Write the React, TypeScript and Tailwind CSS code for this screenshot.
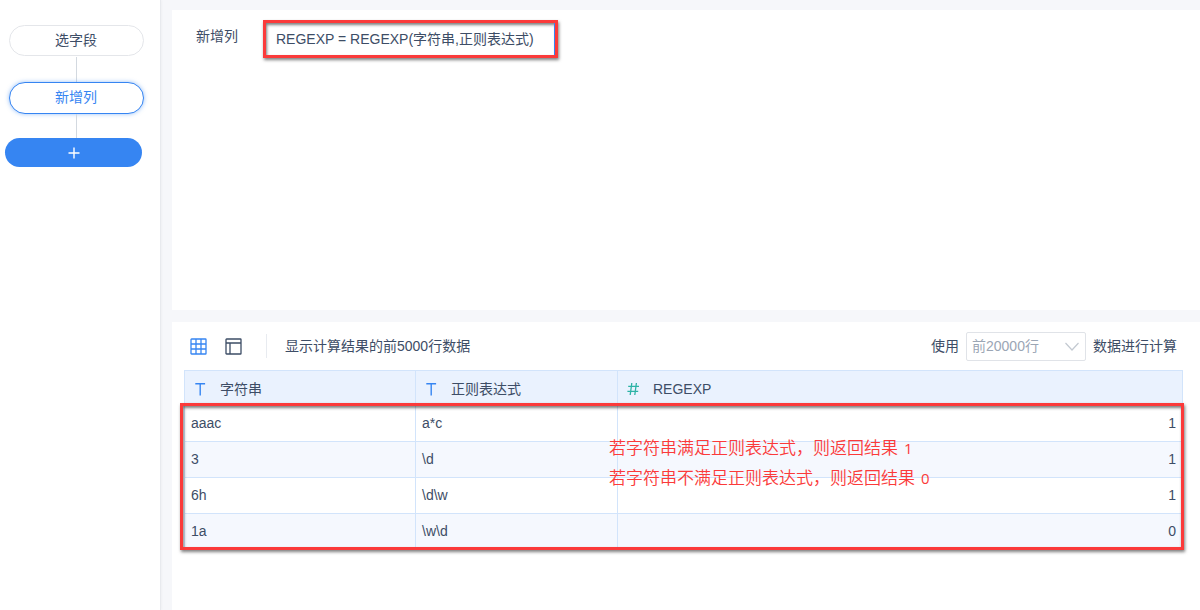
import React from "react";

type Row = { text: string; pattern: string; result: number };

const rows: Row[] = [
  { text: "aaac", pattern: "a*c", result: 1 },
  { text: "3", pattern: "\\d", result: 1 },
  { text: "6h", pattern: "\\d\\w", result: 1 },
  { text: "1a", pattern: "\\w\\d", result: 0 },
];

function TextTypeIcon() {
  return (
    <svg className="h-4 w-4 shrink-0 text-[#3685f2]" viewBox="0 0 16 16" fill="none" stroke="currentColor" strokeWidth="1.4" aria-hidden="true">
      <path d="M3.3 2.7h9.8M8.2 2.7v11.8" />
    </svg>
  );
}

function NumberTypeIcon() {
  return (
    <svg className="h-4 w-4 shrink-0 text-[#2db3a6]" viewBox="0 0 16 16" fill="none" stroke="currentColor" strokeWidth="1.3" aria-hidden="true">
      <path d="M3.2 5.4h10.8M2.4 10.4h10.8M6.8 2L5.2 14M11.4 2L9.8 14" />
    </svg>
  );
}

function GridIcon() {
  return (
    <svg className="h-[17px] w-[17px]" viewBox="0 0 17 17" fill="none" stroke="currentColor" strokeWidth="1.3" aria-hidden="true">
      <rect x="1" y="1" width="15" height="15" rx="0.6" />
      <path d="M6 1v15M11 1v15M1 6h15M1 11h15" />
    </svg>
  );
}

function LayoutIcon() {
  return (
    <svg className="h-[17px] w-[17px]" viewBox="0 0 17 17" fill="none" stroke="currentColor" strokeWidth="1.3" aria-hidden="true">
      <rect x="1" y="1" width="15" height="15" rx="0.6" />
      <path d="M1 5h15M5 5v11" />
    </svg>
  );
}

function Sidebar() {
  return (
    <nav className="w-[161px] shrink-0 border-r border-[#e8eaee] bg-white pt-[25px] pr-4 pl-[5px] shadow-[0_0_3px_rgba(0,0,0,0.06)]">
      <ol className="flex flex-col">
        <li className="flex flex-col items-center">
          <button type="button" className="ml-[3px] h-[31px] w-[135px] rounded-full border border-[#e4e6ea] bg-white pb-[2px]">
            选字段
          </button>
          <span className="mt-px ml-[3px] h-[25px] w-px bg-[#d3d9e0]" />
        </li>
        <li className="flex flex-col items-center">
          <button
            type="button"
            aria-current="step"
            className="ml-[3px] h-8 w-[135px] rounded-full border border-[#3685f2] bg-white pb-[2px] text-[#3685f2] shadow-[0_0_4px_rgba(54,133,242,0.5)]"
          >
            新增列
          </button>
          <span className="ml-[3px] h-6 w-px bg-[#d3d9e0]" />
        </li>
        <li>
          <button type="button" aria-label="添加步骤" className="flex h-[29px] w-[137px] items-center justify-center rounded-full bg-[#3685f2] text-white">
            <svg className="h-3 w-3" viewBox="0 0 12 12" fill="none" stroke="currentColor" strokeWidth="1.4" aria-hidden="true">
              <path d="M6 0.5v11M0.5 6h11" />
            </svg>
          </button>
        </li>
      </ol>
    </nav>
  );
}

function FormulaPanel() {
  return (
    <section className="flex h-[300px] items-start bg-white pt-[10px] pl-6">
      <h2 className="mt-1 mr-[25px] leading-6">新增列</h2>
      <div className="border-[3px] border-[#fb3a3a] shadow-[1px_2px_3px_rgba(0,0,0,0.5),inset_1px_2px_3px_rgba(0,0,0,0.5)]">
        <button type="button" className="block h-8 border-r border-[#3685f2] pr-5 pl-[10px] whitespace-nowrap">
          REGEXP = REGEXP(字符串,正则表达式)
        </button>
      </div>
    </section>
  );
}

function Toolbar() {
  return (
    <div className="flex h-12 items-center">
      <div className="flex items-center gap-[18px] pl-[6px]">
        <button type="button" aria-label="表格视图" className="text-[#3685f2]">
          <GridIcon />
        </button>
        <button type="button" aria-label="布局视图">
          <LayoutIcon />
        </button>
      </div>
      <span className="mr-[18px] ml-6 h-6 w-px bg-[#e8ebf0]" />
      <p>显示计算结果的前5000行数据</p>
      <div className="mr-[6px] ml-auto flex items-center gap-[7px]">
        <label htmlFor="row-limit">使用</label>
        <div className="relative">
          <select
            id="row-limit"
            className="block h-[29px] w-[120px] appearance-none rounded-xs border border-[#e0e3e8] bg-white pr-6 pl-[5px] text-[#9ba6b5]"
          >
            <option>前20000行</option>
          </select>
          <svg className="pointer-events-none absolute top-[10px] right-[7px] h-[9px] w-[14px] text-[#c3c9d1]" viewBox="0 0 14 9" fill="none" stroke="currentColor" strokeWidth="1.2" aria-hidden="true">
            <path d="M0.5 1L7 8L13.5 1" />
          </svg>
        </div>
        <span>数据进行计算</span>
      </div>
    </div>
  );
}

function ResultTable() {
  return (
    <div className="relative">
      <table className="w-full table-fixed border-collapse border border-[#d2e4fb]">
        <colgroup>
          <col className="w-[231px]" />
          <col className="w-[202px]" />
          <col />
        </colgroup>
        <thead>
          <tr className="h-[35px] bg-[#eaf2fe] text-left">
            <th scope="col" className="border border-[#d2e4fb] px-[7px] pt-[2px] pb-0 font-normal">
              <span className="flex items-center gap-3"><TextTypeIcon />字符串</span>
            </th>
            <th scope="col" className="border border-[#d2e4fb] px-[7px] pt-[2px] pb-0 font-normal">
              <span className="flex items-center gap-3"><TextTypeIcon />正则表达式</span>
            </th>
            <th scope="col" className="border border-[#d2e4fb] px-[7px] pt-[2px] pb-0 font-normal">
              <span className="flex items-center gap-3"><NumberTypeIcon />REGEXP</span>
            </th>
          </tr>
        </thead>
        <tbody>
          {rows.map((row) => (
            <tr key={row.text} className="h-9 even:bg-[#f5f8fe]">
              <td className="border border-[#d2e4fb] px-[6px] pt-0 pb-[2px]">{row.text}</td>
              <td className="border border-[#d2e4fb] px-[6px] pt-0 pb-[2px]">{row.pattern}</td>
              <td className="border border-[#d2e4fb] px-[6px] pt-0 pb-[2px] text-right">{row.result}</td>
            </tr>
          ))}
        </tbody>
      </table>
      <div className="pointer-events-none absolute top-[33px] -right-px bottom-0 -left-1 border-[3px] border-[#fb3a3a] shadow-[1px_2px_3px_rgba(0,0,0,0.5),inset_1px_2px_3px_rgba(0,0,0,0.5)]" />
      <div className="pointer-events-none absolute top-[62px] left-[425px] font-['Noto_Sans_CJK_SC',sans-serif] text-[17px] leading-[30px] font-[350] whitespace-nowrap text-[#fb3a3a]">
        <p className="flex items-baseline gap-[6px]">
          若字符串满足正则表达式，则返回结果
          <span className="font-['Open_Sans',sans-serif] text-[15px] leading-5 font-normal">1</span>
        </p>
        <p className="flex items-baseline gap-[6px]">
          若字符串不满足正则表达式，则返回结果
          <span className="font-['Open_Sans',sans-serif] text-[15px] leading-5 font-normal">0</span>
        </p>
      </div>
    </div>
  );
}

export default function App() {
  return (
    <div className="flex min-h-screen bg-[#f6f7fa] font-['Liberation_Sans','Noto_Sans_CJK_SC',sans-serif] text-[14px] leading-5 text-[#3d4d66]">
      <Sidebar />
      <main className="flex min-w-0 flex-1 flex-col gap-3 pt-[10px] pl-[11px]">
        <FormulaPanel />
        <section className="flex-1 bg-white pr-[17px] pl-3">
          <Toolbar />
          <ResultTable />
        </section>
      </main>
    </div>
  );
}
